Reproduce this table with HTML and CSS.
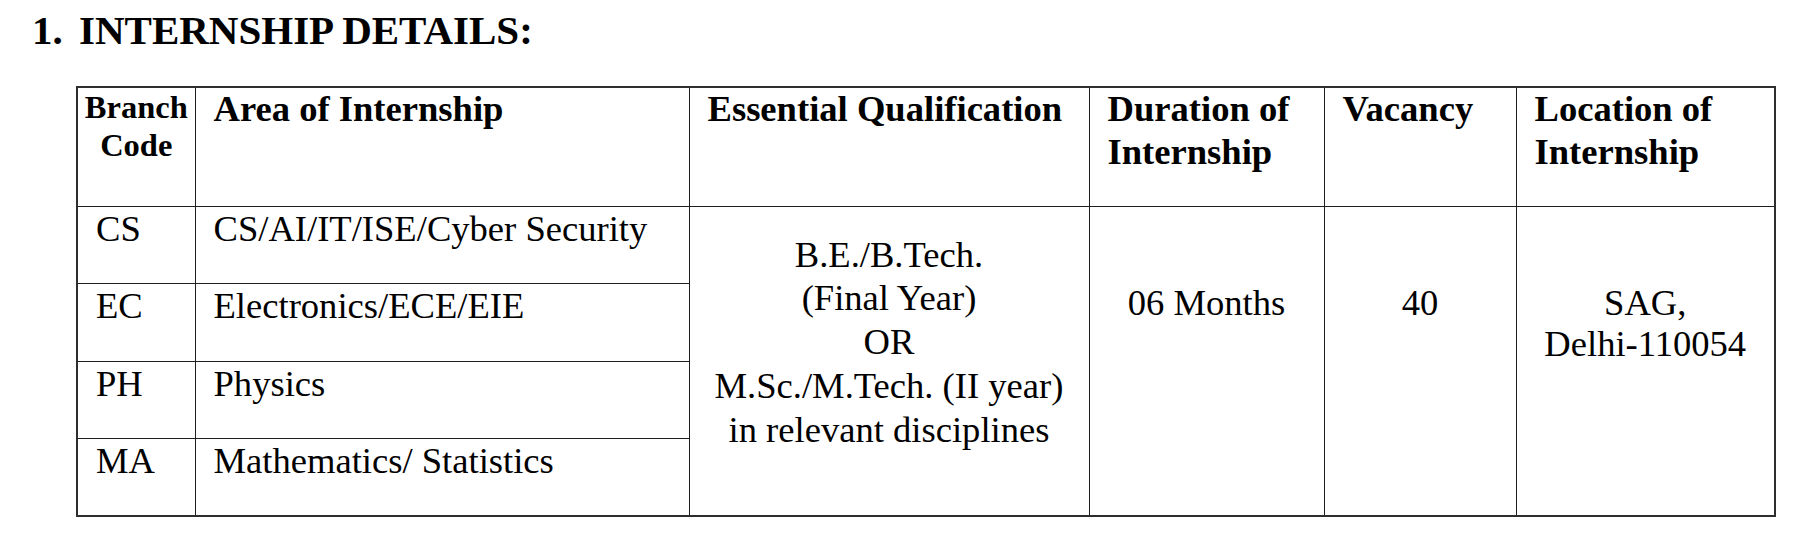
FILE: index.html
```html
<!DOCTYPE html>
<html lang="en">
<head>
<meta charset="utf-8">
<title>Internship Details</title>
<link rel="stylesheet" href="styles.css">
</head>
<body>
<h1 class="section-title"><span class="section-num">1.</span><span class="section-text">INTERNSHIP DETAILS:</span></h1>
<table class="details">
  <colgroup>
    <col class="c-code">
    <col class="c-area">
    <col class="c-qual">
    <col class="c-dur">
    <col class="c-vac">
    <col class="c-loc">
  </colgroup>
  <thead>
    <tr class="head-row">
      <th class="th-code">Branch<br>Code</th>
      <th>Area of Internship</th>
      <th>Essential Qualification</th>
      <th>Duration of<br>Internship</th>
      <th>Vacancy</th>
      <th>Location of<br>Internship</th>
    </tr>
  </thead>
  <tbody>
    <tr class="row r1">
      <td>CS</td>
      <td>CS/AI/IT/ISE/Cyber Security</td>
      <td class="qual" rowspan="4">B.E./B.Tech.<br>(Final Year)<br>OR<br>M.Sc./M.Tech. (II year)<br>in relevant disciplines</td>
      <td class="mid" rowspan="4">06 Months</td>
      <td class="mid" rowspan="4">40</td>
      <td class="mid loc" rowspan="4">SAG,<br>Delhi-110054</td>
    </tr>
    <tr class="row r2">
      <td>EC</td>
      <td>Electronics/ECE/EIE</td>
    </tr>
    <tr class="row r3">
      <td>PH</td>
      <td>Physics</td>
    </tr>
    <tr class="row r4">
      <td>MA</td>
      <td>Mathematics/ Statistics</td>
    </tr>
  </tbody>
</table>
</body>
</html>
```
FILE: styles.css
```css
html, body {
  margin: 0;
  padding: 0;
  background: #ffffff;
  color: #000000;
  font-family: "Liberation Serif", "Times New Roman", serif;
}

.section-title {
  margin: 0;
  padding: 7px 0 0 32px;
  font-size: 41px;
  line-height: 47px;
  font-weight: bold;
  white-space: nowrap;
}

.section-num {
  display: inline-block;
  width: 47px;
}

.details {
  margin: 32px 0 0 76px;
  border-collapse: collapse;
  table-layout: fixed;
  width: 1700px;
  border: 2px solid #2e2e2e;
}

.c-code { width: 118px; }
.c-area { width: 494px; }
.c-qual { width: 400px; }
.c-dur  { width: 235px; }
.c-vac  { width: 192px; }
.c-loc  { width: 259px; }

.details th,
.details td {
  border: 1px solid #1e1e1e;
  vertical-align: top;
  text-align: left;
  white-space: nowrap;
  overflow: hidden;
}

.details th {
  font-size: 36.6px;
  line-height: 42.5px;
  font-weight: bold;
  padding: 0 4px 0 18px;
}

.details th.th-code {
  font-size: 32.5px;
  line-height: 38.4px;
  text-align: center;
  padding: 0;
}

.head-row { height: 119px; }

.details td {
  font-size: 36.6px;
  line-height: 41px;
  padding: 1px 4px 0 18px;
}

.r1 { height: 77px; }
.r2 { height: 78px; }
.r3 { height: 77px; }
.r4 { height: 78px; }

.details td.qual {
  text-align: center;
  line-height: 43.75px;
  padding: 26px 2px 0 2px;
}

.details td.mid {
  text-align: center;
  line-height: 41.7px;
  padding: 75px 2px 0 2px;
}
```
